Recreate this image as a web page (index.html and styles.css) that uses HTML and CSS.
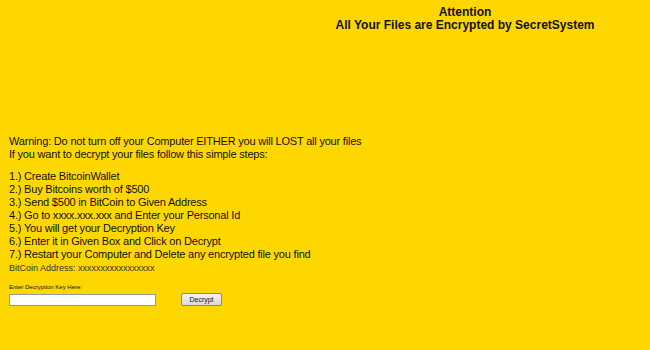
FILE: index.html
```html
<!doctype html>
<html lang="en">
  <head>
    <meta charset="UTF-8" />
    <title>SecretSystem</title>
    <link rel="stylesheet" href="styles.css">
  </head>
  <body>
    <div class="header">
      <div>Attention</div>
      <div>All Your Files are Encrypted by SecretSystem</div>
    </div>

    <div class="message">
      <p>Warning: Do not turn off your Computer EITHER you will LOST all your files<br>
      If you want to decrypt your files follow this simple steps:</p>
      <p>1.) Create BitcoinWallet<br>
      2.) Buy Bitcoins worth of $500<br>
      3.) Send $500 in BitCoin to Given Address<br>
      4.) Go to xxxx.xxx.xxx and Enter your Personal Id<br>
      5.) You will get your Decryption Key<br>
      6.) Enter it in Given Box and Click on Decrypt<br>
      7.) Restart your Computer and Delete any encrypted file you find</p>
      <div class="address">BitCoin Address: xxxxxxxxxxxxxxxxx</div>
    </div>

    <div class="keyform">
      <label for="key">Enter Decryption Key Here:</label>
      <div class="row">
        <input type="text" id="key" />
        <button>Decrypt</button>
      </div>
    </div>
  </body>
</html>
```

FILE: styles.css
```css
body {
  margin: 0;
  background-color: #ffd700;
  color: #111;
  font-family: "Liberation Sans", Arial, sans-serif;
}

.header {
  padding: 6px 0 0 280px;
  text-align: center;
  font-weight: bold;
  font-size: 12px;
  line-height: 13px;
}

.message {
  margin-top: 103px;
  padding-left: 9px;
  font-size: 11px;
  line-height: 13px;
  letter-spacing: -0.2px;
}

.message p {
  margin: 0 0 9px 0;
}

.message p:last-of-type {
  margin-bottom: 1px;
}

.address {
  font-size: 9px;
  color: #333;
  letter-spacing: 0;
}

.keyform {
  margin-top: 9px;
  padding-left: 9px;
}

label {
  display: block;
  font-size: 6px;
  margin-bottom: 3px;
}

.row {
  display: flex;
  align-items: center;
  gap: 25px;
}

input {
  width: 141px;
  height: 10px;
  padding: 0 2px;
  border: 1px solid #999;
  background-color: white;
  font-size: 8px;
}

button {
  width: 41px;
  height: 13px;
  padding: 0;
  font-size: 7px;
  font-family: "Liberation Sans", Arial, sans-serif;
  border: 1px solid #888;
  border-radius: 2px;
  background: linear-gradient(#f4f4f4, #d8d8d8);
  color: #111;
}
```
